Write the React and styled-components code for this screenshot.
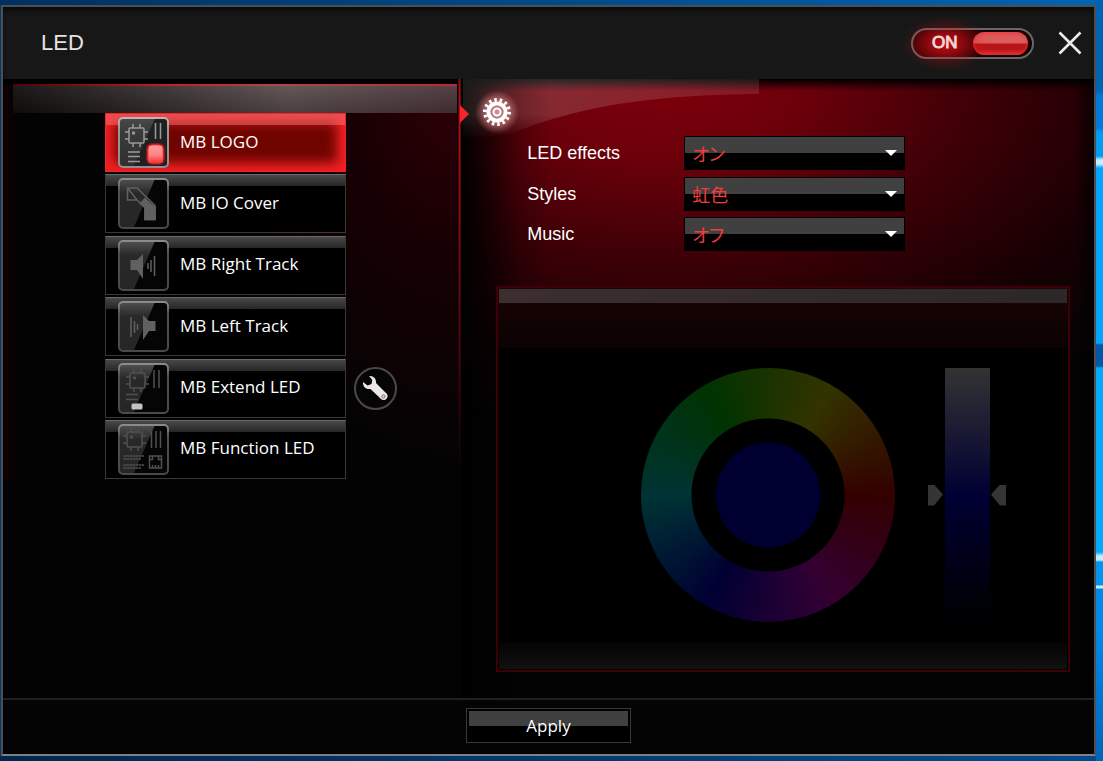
import React, { useState } from "react";
import styled, { createGlobalStyle, css } from "styled-components";

const GlobalStyle = createGlobalStyle`
  *, *::before, *::after { box-sizing: border-box; }
  body { margin: 0; background: #0064b4; }
  button, select, input { font: inherit; margin: 0; }
`;

const uiFont = `"Open Sans", "Noto Sans", sans-serif`;
const labelFont = `"Liberation Sans", Arial, sans-serif`;

const Desktop = styled.div`
  display: flex;
  min-height: 100vh;
  padding: 5px 7px 6px 1px;
  background:
    linear-gradient(
        180deg,
        #0064b4 0 90px, #0078d8 96px 128px, #009cf0 132px 156px, #c8ecff 160px 164px,
        #00a4ff 168px 343px, #0058a8 345px 366px, #00aaff 368px 552px, #c8ecff 556px 560px,
        #0094f0 562px 585px, #c8ecff 586px 588px, #0088e8 589px 630px, #0064b8 100%
      ) right / 7px 100% no-repeat,
    linear-gradient(90deg, #003060, #0064b4) top / 100% 5px no-repeat,
    linear-gradient(90deg, #00264e, #004c8c) bottom / 100% 6px no-repeat,
    #003a70;
`;

const Window = styled.main`
  flex: 1;
  display: flex;
  flex-direction: column;
  border: 2px solid #4e4e4e;
  border-bottom-color: #808080;
  background: #040404;
  color: #fff;
  font-family: ${uiFont};
  font-size: 18px;
`;

const Header = styled.header`
  display: flex;
  align-items: center;
  gap: 24px;
  height: 72px;
  padding: 0 12px 0 38px;
  background: #171717;
  box-shadow: inset 0 4px 4px #0c0c0c;
`;

const Title = styled.h1`
  flex: 1;
  margin: 0;
  color: #e8e2e2;
  font: 400 22px/28px ${labelFont};
`;

const PowerSwitch = styled.label`
  position: relative;
  display: flex;
  align-items: center;
  justify-content: space-between;
  width: 123px;
  height: 31px;
  padding: 0 4px 0 19px;
  border: 2px solid #6c6666;
  border-radius: 16px;
  background: radial-gradient(ellipse 42px 26px at 32px 13px, #a80c12, #4a0508 60%, #100203);
  color: #f0d4d4;
  font: 400 17px/20px ${labelFont};
  -webkit-text-stroke: 1px #f0d4d4;
  cursor: pointer;

  &::before {
    content: "";
    position: absolute;
    left: -12px;
    top: -14px;
    width: 88px;
    height: 56px;
    background: radial-gradient(closest-side, rgba(220, 10, 20, 0.5), rgba(180, 10, 20, 0));
    pointer-events: none;
  }
`;

const HiddenCheckbox = styled.input`
  position: absolute;
  inset: 0;
  opacity: 0;
  cursor: pointer;
`;

const SwitchText = styled.span`
  position: relative;
`;

const SwitchKnob = styled.span`
  width: 55px;
  height: 23px;
  border-radius: 12px;
  background: linear-gradient(180deg, #e85054 0 2px, #dc5c5c 4px 11px, #b81418 12px 17px, #d82c30 22px);
  box-shadow: inset 0 0 4px #e83034;
`;

const CloseButton = styled.button`
  display: grid;
  place-items: center;
  width: 24px;
  height: 28px;
  padding: 0;
  border: 0;
  background: none;
  color: #eee8e8;
  cursor: pointer;
`;

const Body = styled.div`
  flex: 1;
  display: grid;
  grid-template-columns: 42% 1fr;
`;

const ZonePanel = styled.nav`
  position: relative;
  padding: 5px 4px 24px 10px;
  background:
    linear-gradient(180deg, #000 0 3px, transparent 8px),
    radial-gradient(ellipse 260px 380px at 100% 0, #300006, #170003 45%, transparent),
    linear-gradient(90deg, #100002, rgba(4, 2, 3, 0) 14px) top / 100% 400px no-repeat,
    #040304;

  &::after {
    content: "";
    position: absolute;
    top: 0;
    right: -1px;
    width: 5px;
    height: 400px;
    background: linear-gradient(90deg, #000 1px, #b01018 2px 3px, #300004 4px);
    mask-image: linear-gradient(180deg, rgba(0, 0, 0, 0.8), #000 8%, transparent);
  }
`;

const GlassStrip = styled.div`
  height: 29px;
  border-top: 2px solid;
  border-image: linear-gradient(90deg, #4a0408, #c81c24 35%, #a84850 60%, #b02c34) 1;
  background:
    linear-gradient(180deg, rgba(255, 255, 255, 0.05), rgba(0, 0, 0, 0.2)),
    linear-gradient(90deg, #120e0e, #3a3232 35%, #5c4e4f 62%, #4c3639);
`;

const ZoneList = styled.ul`
  display: grid;
  align-content: space-between;
  height: 366px;
  margin: 0 0 0 92px;
  padding: 0;
  list-style: none;
`;

const ZoneItem = styled.li`
  display: flex;
  align-items: center;
  gap: 8px;
`;

const ZoneButton = styled.button`
  position: relative;
  display: flex;
  align-items: center;
  gap: 11px;
  width: 241px;
  height: 59px;
  padding: 0 0 0 12px;
  border: 1px solid #383838;
  border-top-color: #6a6a6a;
  background: linear-gradient(180deg, #484848, #262626 11px, #000 11px);
  color: #fff;
  font-size: 17px;
  line-height: 24px;
  text-align: left;
  cursor: pointer;

  ${(p) =>
    p.$active &&
    css`
      border-color: #f02428;
      background: #700500;
      box-shadow: inset 0 0 12px 8px #f42024;

      &::before {
        content: "";
        position: absolute;
        inset: 0 0 auto;
        height: 11px;
        background: rgba(255, 140, 140, 0.4);
      }
    `}
`;

const ZoneText = styled.span`
  position: relative;
  padding-bottom: 2px;
`;

const ZoneSvg = styled.svg`
  position: relative;
  flex: none;
`;

const ToolButton = styled.button`
  display: grid;
  place-items: center;
  width: 43px;
  height: 43px;
  padding: 0;
  border: 2px solid #4c4848;
  border-radius: 50%;
  background: #050505;
  cursor: pointer;
`;

const SettingsPanel = styled.section`
  position: relative;
  padding: 0 24px 26px 35px;
  background:
    linear-gradient(180deg, #000, rgba(0, 0, 0, 0) 12px),
    linear-gradient(90deg, #000 0, rgba(0, 0, 0, 0.75) 20px, rgba(0, 0, 0, 0.2) 60px, transparent 90px),
    linear-gradient(270deg, rgba(0, 0, 0, 0.7), transparent 20px),
    radial-gradient(ellipse 640px 360px at 32% 0, #7e000c, #6c000a 22%, #3c0006 50%, #1a0003 75%, #040304);
`;

const Gloss = styled.svg`
  position: absolute;
  left: 2px;
  top: 0;
  pointer-events: none;
`;

const Pointer = styled.svg`
  position: absolute;
  left: -1px;
  top: 26px;
`;

const SettingsHead = styled.div`
  position: relative;
  height: 57px;
  margin-left: -21px;
  padding-top: 11px;
`;

const SettingsForm = styled.div`
  position: relative;
  display: grid;
  align-content: space-between;
  height: 115px;
  margin-left: 31px;
`;

const Field = styled.div`
  display: grid;
  grid-template-columns: 157px 221px;
  align-items: center;
`;

const FieldLabel = styled.label`
  font: 400 18px/24px ${labelFont};
`;

const SelectBox = styled.div`
  position: relative;
  display: flex;
`;

const Select = styled.select`
  flex: 1;
  height: 34px;
  padding: 0 32px 0 7px;
  border: 1px solid #000;
  border-radius: 0;
  appearance: none;
  background: linear-gradient(180deg, #404040 16px, #000 16px);
  color: #f53b3e;
  font-family: "Noto Sans CJK JP", sans-serif;
  font-size: 18px;
  font-weight: 400;
  font-feature-settings: "palt";
`;

const SelectArrow = styled.svg`
  position: absolute;
  right: 8px;
  top: 14px;
  pointer-events: none;
`;

const ColourPanel = styled.div`
  display: flex;
  justify-content: flex-end;
  gap: 33px;
  height: 386px;
  margin-top: 35px;
  padding: 80px 62px 0 0;
  border: 2px solid #3c0006;
  background:
    linear-gradient(90deg, #3c2e2f, #2c2827) 50% 1px / calc(100% - 2px) 14px no-repeat,
    linear-gradient(180deg, #1e0406, #0e0203 40px, #0d0203) top / 100% 60px no-repeat,
    linear-gradient(180deg, #040404, #111) 50% calc(100% - 1px) / calc(100% - 2px) 27px no-repeat,
    #000;
`;

const Wheel = styled.div`
  display: grid;
  place-items: center;
  width: 254px;
  height: 254px;
  border-radius: 50%;
  background:
    radial-gradient(circle, #000030 52px, #000 53px 76px, transparent 77px),
    conic-gradient(from 90deg, #330000, #330033, #000033, #003333, #003300, #333300, #330000);
`;

const Brightness = styled.input`
  width: 78px;
  height: 254px;
  appearance: none;
  writing-mode: vertical-lr;
  direction: rtl;
  background: linear-gradient(180deg, #333, #000033 50%, #000) center / 45px 100% no-repeat;

  &::-webkit-slider-thumb {
    appearance: none;
    width: 78px;
    height: 21px;
    background: #353535;
    clip-path: polygon(
      0 0, 6px 0, 15px 10px, 6px 21px, 72px 21px, 63px 10px, 72px 0, 78px 0, 78px 21px, 0 21px
    );
  }
`;

const Footer = styled.footer`
  display: flex;
  justify-content: center;
  height: 56px;
  padding-top: 8px;
  border-top: 2px solid #202020;
`;

const ApplyButton = styled.button`
  width: 165px;
  height: 35px;
  padding: 0;
  border: 1px solid #383838;
  background:
    linear-gradient(#404040, #404040) 50% 2px / calc(100% - 4px) 15px no-repeat,
    #000;
  color: #fff;
  font-size: 17px;
  cursor: pointer;
`;

function Chip({ x, y }) {
  return (
    <g transform={`translate(${x} ${y})`}>
      <rect x="4" y="4" width="15" height="15" rx="1" />
      <path d="M8 0v4M15 0v4M8 19v4M15 19v4M0 8h4M0 15h4M19 8h4M19 15h4" />
      <circle cx="8.5" cy="9" r="1" />
    </g>
  );
}

function ZoneDrawing({ kind }) {
  switch (kind) {
    case "logo":
      return (
        <>
          <Chip x={7} y={7} />
          <path d="M37.5 6v16M42.5 6v16M10 35h12M10 39.500h12M10 44.500h12" />
          <rect x="28" y="26" width="19" height="22" rx="6" fill="#e01418" stroke="none" opacity="0.55" />
          <rect x="30" y="28" width="15" height="18" rx="4" fill="url(#lamp)" stroke="#ff3a3c" strokeWidth="1" />
        </>
      );
    case "cover":
      return (
        <>
          <path d="M9.500 10h9.500l18 17.500v14H27V29.500L19 22H9.500zM9.500 10 19 22" />
          <path d="M27 20.500l10 9v12H27V29.500l-4.500-4z" fill="currentColor" />
        </>
      );
    case "right":
      return (
        <>
          <path d="M12.500 20h6.500l6-6v25l-6-9h-6.500z" fill="currentColor" stroke="none" />
          <path d="M30 23v6M33 20v12M36.500 16v20" />
        </>
      );
    case "left":
      return (
        <>
          <path d="M37.500 20H31l-6-6v25l6-9h6.500z" fill="currentColor" stroke="none" />
          <path d="M19.500 23v6M16.500 20v12M13 16v20" />
        </>
      );
    case "extend":
      return (
        <>
          <Chip x={8} y={6} />
          <path d="M36 7v18M41 7v18M8 31.500h12M8 36.500h12" />
          <rect x="13.500" y="40.500" width="11" height="6" rx="1.500" fill="#c4c4c4" stroke="none" />
        </>
      );
    default:
      return (
        <>
          <Chip x={5} y={4} />
          <path d="M33.500 7v17M38 7v17M42.500 7v17" />
          <path d="M5.500 32h21M5.500 35h18M5.500 41h21M5.500 44h18" strokeDasharray="2.500 0.500" />
          <path d="M31.500 32h12v12h-12zM31.500 35.500h3V32M43.500 35.500h-3V32M34.500 44v-3M37.500 44v-3M40.500 44v-3" />
        </>
      );
  }
}

function ZoneIcon({ kind, active }) {
  return (
    <ZoneSvg
      width="51"
      height="51"
      viewBox="0 0 51 51"
      fill="none"
      stroke="currentColor"
      strokeWidth="1.5"
      color={active ? "#9a9a9a" : kind === "extend" || kind === "function" ? "#505050" : "#606060"}
      aria-hidden="true"
    >
      <defs>
        <linearGradient id={`shade-${kind}`} x1="0" y1="0" x2="0" y2="1">
          <stop offset="0" stopColor={active ? "#4a4a4a" : "#505050"} />
          <stop offset="0.3" stopColor={active ? "#3a3a3a" : "#282828"} />
          <stop offset="1" stopColor={active ? "#303030" : "#262626"} />
        </linearGradient>
        <linearGradient id={`rim-${kind}`} x1="0" y1="0" x2="0" y2="1">
          <stop offset="0" stopColor={active ? "#b8b8b8" : "#8c8c8c"} />
          <stop offset="0.25" stopColor={active ? "#989898" : "#505050"} />
          <stop offset="1" stopColor={active ? "#909090" : "#4a4a4a"} />
        </linearGradient>
        <linearGradient id="lamp" x1="0" y1="0" x2="0" y2="1">
          <stop offset="0" stopColor="#ff9c9c" />
          <stop offset="0.55" stopColor="#ff8484" />
          <stop offset="1" stopColor="#f43034" />
        </linearGradient>
      </defs>
      <rect x="1" y="1" width="49" height="49" rx="4" fill={active ? "#202020" : "#050505"} stroke="none" />
      <path d="M5 1h32L15.500 50H5a4 4 0 0 1-4-4V5a4 4 0 0 1 4-4z" fill={`url(#shade-${kind})`} stroke="none" />
      <rect x="1" y="1" width="49" height="49" rx="4" stroke={`url(#rim-${kind})`} strokeWidth="2" />
      <ZoneDrawing kind={kind} />
    </ZoneSvg>
  );
}

function WrenchIcon() {
  return (
    <svg width="39" height="39" viewBox="0 0 39 39" aria-hidden="true">
      <path
        d="M13 7c4.500-.5 7.500 2.500 7 7l10.500 10.500c3.500 3.500-2 9-5.500 5.500L14.500 20C10 20.800 6.500 17.500 7 13l4.500 3.500 4-1.500.8-4z"
        fill="#eee6e6"
      />
      <circle cx="27.500" cy="27.500" r="1.600" fill="none" stroke="#6a6464" />
    </svg>
  );
}

function GearIcon() {
  return (
    <svg width="44" height="44" viewBox="0 0 44 44" aria-hidden="true">
      <defs>
        <radialGradient id="halo">
          <stop offset="0.4" stopColor="#ffc8c8" stopOpacity="0.6" />
          <stop offset="0.7" stopColor="#ff9a9a" stopOpacity="0.35" />
          <stop offset="1" stopColor="#ff8080" stopOpacity="0" />
        </radialGradient>
      </defs>
      <circle cx="22" cy="22" r="22" fill="url(#halo)" />
      <circle cx="22" cy="22" r="12" fill="none" stroke="#fff" strokeWidth="4" pathLength="28" strokeDasharray="0.900 1.100" />
      <circle cx="22" cy="22" r="8.500" fill="none" stroke="#fff" strokeWidth="4" />
      <circle cx="22" cy="22" r="6.500" fill="#bc7c80" />
      <circle cx="22" cy="22" r="3.500" fill="#c88c90" stroke="#fff" strokeWidth="2" />
    </svg>
  );
}

const zones = [
  { kind: "logo", name: "MB LOGO" },
  { kind: "cover", name: "MB IO Cover" },
  { kind: "right", name: "MB Right Track" },
  { kind: "left", name: "MB Left Track" },
  { kind: "extend", name: "MB Extend LED" },
  { kind: "function", name: "MB Function LED" },
];

const fields = [
  { id: "effects", label: "LED effects", value: "オン", options: ["オン", "オフ"] },
  { id: "styles", label: "Styles", value: "虹色", options: ["虹色"] },
  { id: "music", label: "Music", value: "オフ", options: ["オン", "オフ"] },
];

export default function App() {
  const [zone, setZone] = useState("logo");
  const [brightness, setBrightness] = useState(50);

  return (
    <>
      <GlobalStyle />
      <Desktop>
        <Window>
          <Header>
            <Title>LED</Title>
            <PowerSwitch>
              <HiddenCheckbox type="checkbox" role="switch" defaultChecked />
              <SwitchText>ON</SwitchText>
              <SwitchKnob />
            </PowerSwitch>
            <CloseButton type="button" aria-label="Close">
              <svg width="24" height="24" viewBox="0 0 24 24" stroke="currentColor" strokeWidth="2.600" aria-hidden="true">
                <path d="M1.500 1.500l21 21M22.500 1.500l-21 21" />
              </svg>
            </CloseButton>
          </Header>

          <Body>
            <ZonePanel>
              <GlassStrip />
              <ZoneList>
                {zones.map(({ kind, name }) => (
                  <ZoneItem key={kind}>
                    <ZoneButton type="button" $active={kind === zone} onClick={() => setZone(kind)}>
                      <ZoneIcon kind={kind} active={kind === zone} />
                      <ZoneText>{name}</ZoneText>
                    </ZoneButton>
                    {kind === "extend" && (
                      <ToolButton type="button" aria-label="Configure">
                        <WrenchIcon />
                      </ToolButton>
                    )}
                  </ZoneItem>
                ))}
              </ZoneList>
            </ZonePanel>

            <SettingsPanel>
              <Gloss width="296" height="64" viewBox="0 0 296 64" aria-hidden="true">
                <defs>
                  <linearGradient id="gloss" x1="0" y1="0" x2="1" y2="0">
                    <stop offset="0" stopColor="#fff" stopOpacity="0.1" />
                    <stop offset="0.3" stopColor="#fff" stopOpacity="0.16" />
                    <stop offset="1" stopColor="#fff" stopOpacity="0.1" />
                  </linearGradient>
                  <linearGradient id="glossFade" x1="0" y1="0" x2="0" y2="1">
                    <stop offset="0.55" stopColor="#fff" />
                    <stop offset="0.95" stopColor="#000" />
                  </linearGradient>
                  <mask id="glossMask">
                    <rect width="296" height="64" fill="url(#glossFade)" />
                  </mask>
                </defs>
                <path
                  d="M0 0h296v15C200 16 130 24 60 50 45 56 20 59 0 59z"
                  fill="url(#gloss)"
                  mask="url(#glossMask)"
                />
              </Gloss>
              <Pointer width="10" height="18" viewBox="0 0 10 18" aria-hidden="true">
                <path d="M0 0l9 9-9 9z" fill="#f82428" />
              </Pointer>
              <SettingsHead>
                <GearIcon />
              </SettingsHead>
              <SettingsForm>
                {fields.map(({ id, label, value, options }) => (
                  <Field key={id}>
                    <FieldLabel htmlFor={id}>{label}</FieldLabel>
                    <SelectBox>
                      <Select id={id} defaultValue={value}>
                        {options.map((option) => (
                          <option key={option}>{option}</option>
                        ))}
                      </Select>
                      <SelectArrow width="12" height="6" viewBox="0 0 12 6" aria-hidden="true">
                        <path d="M0 0h12L6 6z" fill="#fff" />
                      </SelectArrow>
                    </SelectBox>
                  </Field>
                ))}
              </SettingsForm>
              <ColourPanel>
                <Wheel role="img" aria-label="Colour wheel" />
                <Brightness
                  type="range"
                  aria-label="Brightness"
                  value={brightness}
                  onChange={(event) => setBrightness(Number(event.target.value))}
                />
              </ColourPanel>
            </SettingsPanel>
          </Body>

          <Footer>
            <ApplyButton type="button">Apply</ApplyButton>
          </Footer>
        </Window>
      </Desktop>
    </>
  );
}
